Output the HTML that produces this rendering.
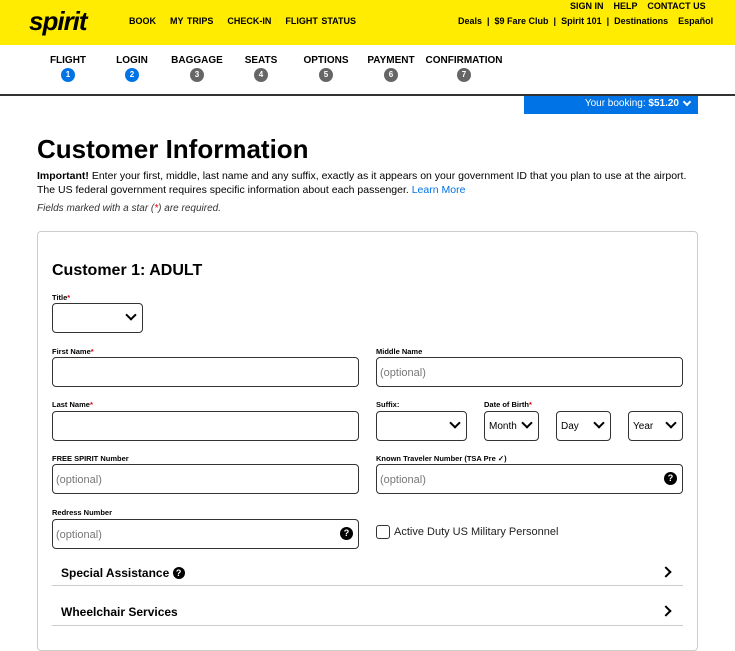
<!DOCTYPE html>
<html><head><meta charset="utf-8"><style>
*{box-sizing:border-box;margin:0;padding:0}
body{width:735px;height:636px;overflow:hidden;background:#fff;font-family:"Liberation Sans",sans-serif;color:#000;position:relative}
.a{position:absolute}
.hdr{left:0;top:0;width:735px;height:45px;background:#ffec00}
.nav{font-size:9px;font-weight:bold;white-space:nowrap}
.step{font-size:10px;font-weight:bold;text-align:center;width:70px}
.num{display:block;margin:2px auto 0;width:14px;height:14px;border-radius:7px;background:#666;color:#fff;font-size:8px;line-height:14px}
.blue{background:#0073e6}
.lbl{font-size:7.5px;font-weight:bold}
.lbl i{color:#d00;font-style:normal}
.box{border:1px solid #333;border-radius:4px;height:30px;background:#fff;font-size:11px;color:#777;padding:9px 3px}
.chev{position:absolute;right:7px;top:7px;width:8px;height:8px;border-right:2.5px solid #000;border-bottom:2.5px solid #000;transform:rotate(45deg)}
.sel{font-size:10px;color:#000;padding:9px 4px}
.q{position:absolute;right:5px;top:7px;width:13px;height:13px;border-radius:7px;background:#000;color:#fff;font-size:9px;font-weight:bold;text-align:center;line-height:13px}
.arr{position:absolute;width:8px;height:8px;border-right:2.5px solid #000;border-top:2.5px solid #000;transform:rotate(45deg)}
</style></head><body>
<div class="a hdr"></div>
<div class="a" style="left:29px;top:6px;font-size:26px;font-weight:bold;font-style:italic;letter-spacing:-1px">spirit</div>
<div class="a nav" style="left:129px;top:16px;word-spacing:1px">BOOK &nbsp;&nbsp; MY TRIPS &nbsp;&nbsp; CHECK-IN &nbsp;&nbsp; FLIGHT STATUS</div>
<div class="a nav" style="left:570px;top:1px">SIGN IN &nbsp;&nbsp; HELP &nbsp;&nbsp; CONTACT US</div>
<div class="a nav" style="left:458px;top:16px">Deals &nbsp;|&nbsp; $9 Fare Club &nbsp;|&nbsp; Spirit 101 &nbsp;|&nbsp; Destinations &nbsp;&nbsp; Español</div>
<div class="a step" style="left:33px;top:55px">FLIGHT<span class="num blue">1</span></div>
<div class="a step" style="left:97px;top:55px">LOGIN<span class="num blue">2</span></div>
<div class="a step" style="left:162px;top:55px">BAGGAGE<span class="num">3</span></div>
<div class="a step" style="left:226px;top:55px">SEATS<span class="num">4</span></div>
<div class="a step" style="left:291px;top:55px">OPTIONS<span class="num">5</span></div>
<div class="a step" style="left:356px;top:55px">PAYMENT<span class="num">6</span></div>
<div class="a step" style="left:420px;top:55px;width:88px">CONFIRMATION<span class="num">7</span></div>
<div class="a" style="left:0;top:94px;width:735px;height:2px;background:#333"></div>
<div class="a" style="left:524px;top:96px;width:174px;height:18px;background:#0073e6;color:#fff;font-size:10px;text-align:right;padding:2px 19px 0 0">Your booking: <b>$51.20</b></div>
<div class="a" style="left:684px;top:99px;width:6px;height:6px;border-right:2px solid #fff;border-bottom:2px solid #fff;transform:rotate(45deg)"></div>
<div class="a" style="left:37px;top:134px;font-size:26px;font-weight:bold">Customer Information</div>
<div class="a" style="left:37px;top:169px;font-size:10.5px;line-height:14px"><b>Important!</b> Enter your first, middle, last name and any suffix, exactly as it appears on your government ID that you plan to use at the airport.<br>The US federal government requires specific information about each passenger. <span style="color:#0073e6">Learn More</span></div>
<div class="a" style="left:37px;top:203px;font-size:10px;font-style:italic;color:#333">Fields marked with a star (<span style="color:#d00">*</span>) are required.</div>
<div class="a" style="left:37px;top:231px;width:661px;height:420px;border:1px solid #ccc;border-radius:4px"></div>
<div class="a" style="left:52px;top:262px;font-size:16px;font-weight:bold">Customer 1: ADULT</div>
<div class="a lbl" style="left:52px;top:293px">Title<i>*</i></div>
<div class="a box" style="left:52px;top:303px;width:91px"><span class="chev"></span></div>
<div class="a lbl" style="left:52px;top:347px">First Name<i>*</i></div>
<div class="a box" style="left:52px;top:357px;width:307px"></div>
<div class="a lbl" style="left:376px;top:347px">Middle Name</div>
<div class="a box" style="left:376px;top:357px;width:307px">(optional)</div>
<div class="a lbl" style="left:52px;top:400px">Last Name<i>*</i></div>
<div class="a box" style="left:52px;top:411px;width:307px"></div>
<div class="a lbl" style="left:376px;top:400px">Suffix:</div>
<div class="a box" style="left:376px;top:411px;width:91px"><span class="chev"></span></div>
<div class="a lbl" style="left:484px;top:400px">Date of Birth<i>*</i></div>
<div class="a box sel" style="left:484px;top:411px;width:55px">Month<span class="chev"></span></div>
<div class="a box sel" style="left:556px;top:411px;width:55px">Day<span class="chev"></span></div>
<div class="a box sel" style="left:628px;top:411px;width:55px">Year<span class="chev"></span></div>
<div class="a lbl" style="left:52px;top:454px">FREE SPIRIT Number</div>
<div class="a box" style="left:52px;top:464px;width:307px">(optional)</div>
<div class="a lbl" style="left:376px;top:454px">Known Traveler Number (TSA Pre ✓)</div>
<div class="a box" style="left:376px;top:464px;width:307px">(optional)<span class="q">?</span></div>
<div class="a lbl" style="left:52px;top:508px">Redress Number</div>
<div class="a box" style="left:52px;top:519px;width:307px">(optional)<span class="q">?</span></div>
<div class="a" style="left:376px;top:525px;width:14px;height:14px;border:1px solid #333;border-radius:3px"></div>
<div class="a" style="left:394px;top:526px;font-size:11px;color:#222">Active Duty US Military Personnel</div>
<div class="a" style="left:61px;top:566px;font-size:12px;font-weight:bold">Special Assistance <span style="display:inline-block;width:12px;height:12px;border-radius:6px;background:#000;color:#fff;font-size:9px;text-align:center;line-height:12px;vertical-align:1px">?</span></div>
<div class="arr" style="left:662px;top:568px"></div>
<div class="a" style="left:52px;top:585px;width:631px;height:1px;background:#ccc"></div>
<div class="a" style="left:61px;top:605px;font-size:12px;font-weight:bold">Wheelchair Services</div>
<div class="arr" style="left:662px;top:607px"></div>
<div class="a" style="left:52px;top:625px;width:631px;height:1px;background:#ccc"></div>
</body></html>
